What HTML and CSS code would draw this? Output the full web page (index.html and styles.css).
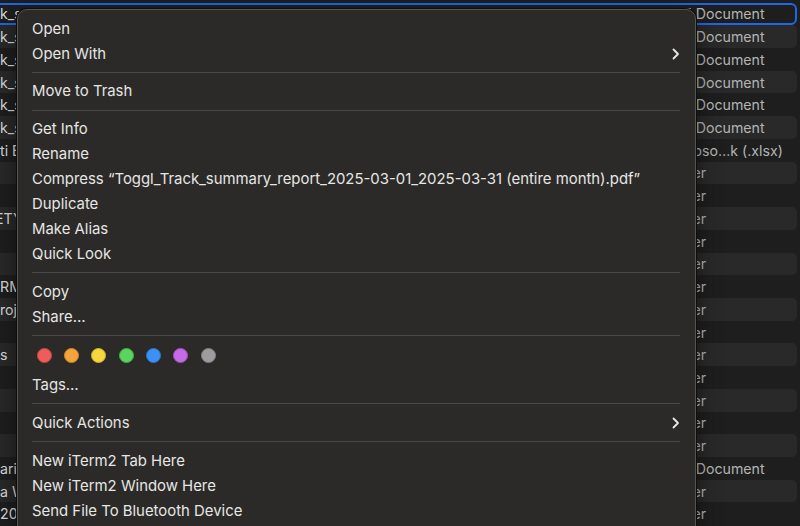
FILE: index.html
```html
<!DOCTYPE html>
<html>
<head>
<meta charset="utf-8">
<link rel="stylesheet" href="styles.css">
</head>
<body>
<div class="finder">
  <div class="row sel"><span class="name">k_summary_report</span><span class="date">2025-03-31 at 10:18</span><span class="size">44,7 KB</span><span class="kind">PDF Document</span></div>
  <div class="row alt"><span class="name">k_summary</span><span class="date">2025-03-01</span><span class="size">41 KB</span><span class="kind">PDF Document</span></div>
  <div class="row"><span class="name">k_summary</span><span class="date"></span><span class="size"></span><span class="kind">PDF Document</span></div>
  <div class="row alt"><span class="name">k_summary</span><span class="date"></span><span class="size"></span><span class="kind">PDF Document</span></div>
  <div class="row"><span class="name">k_summary</span><span class="date"></span><span class="size"></span><span class="kind">PDF Document</span></div>
  <div class="row alt"><span class="name">k_summary</span><span class="date"></span><span class="size"></span><span class="kind">PDF Document</span></div>
  <div class="row"><span class="name">ti Excel</span><span class="date"></span><span class="size"></span><span class="kind">Microso…k (.xlsx)</span></div>
  <div class="row alt"><span class="name"></span><span class="date"></span><span class="size"></span><span class="kind">Folder</span></div>
  <div class="row"><span class="name"></span><span class="date"></span><span class="size"></span><span class="kind">Folder</span></div>
  <div class="row alt"><span class="name cut">ETY</span><span class="date"></span><span class="size"></span><span class="kind">Folder</span></div>
  <div class="row"><span class="name"></span><span class="date"></span><span class="size"></span><span class="kind">Folder</span></div>
  <div class="row alt"><span class="name"></span><span class="date"></span><span class="size"></span><span class="kind">Folder</span></div>
  <div class="row"><span class="name">RM</span><span class="date"></span><span class="size"></span><span class="kind">Folder</span></div>
  <div class="row alt"><span class="name">roj</span><span class="date"></span><span class="size"></span><span class="kind">Folder</span></div>
  <div class="row"><span class="name"></span><span class="date"></span><span class="size"></span><span class="kind">Folder</span></div>
  <div class="row alt"><span class="name">s</span><span class="date"></span><span class="size"></span><span class="kind">Folder</span></div>
  <div class="row"><span class="name"></span><span class="date"></span><span class="size"></span><span class="kind">Folder</span></div>
  <div class="row alt"><span class="name"></span><span class="date"></span><span class="size"></span><span class="kind">Folder</span></div>
  <div class="row"><span class="name"></span><span class="date"></span><span class="size"></span><span class="kind">Folder</span></div>
  <div class="row alt"><span class="name"></span><span class="date"></span><span class="size"></span><span class="kind">Folder</span></div>
  <div class="row"><span class="name">arity</span><span class="date"></span><span class="size"></span><span class="kind">PDF Document</span></div>
  <div class="row alt"><span class="name">a Work</span><span class="date"></span><span class="size"></span><span class="kind">Folder</span></div>
  <div class="row"><span class="name">2025</span><span class="date"></span><span class="size"></span><span class="kind">Folder</span></div>
</div>

<div class="menu">
  <div class="item">Open</div>
  <div class="item sub">Open With<svg class="chev" viewBox="0 0 8 12" width="8" height="12"><polyline points="1.5,1.5 6,6 1.5,10.5"/></svg></div>
  <div class="sep"></div>
  <div class="item">Move to Trash</div>
  <div class="sep"></div>
  <div class="item">Get Info</div>
  <div class="item">Rename</div>
  <div class="item">Compress “Toggl_Track_summary_report_2025-03-01_2025-03-31 (entire month).pdf”</div>
  <div class="item">Duplicate</div>
  <div class="item">Make Alias</div>
  <div class="item">Quick Look</div>
  <div class="sep"></div>
  <div class="item">Copy</div>
  <div class="item">Share…</div>
  <div class="sep"></div>
  <div class="tags">
    <span class="dot red"></span><span class="dot orange"></span><span class="dot yellow"></span><span class="dot green"></span><span class="dot blue"></span><span class="dot purple"></span><span class="dot gray"></span>
  </div>
  <div class="item">Tags…</div>
  <div class="sep"></div>
  <div class="item sub">Quick Actions<svg class="chev" viewBox="0 0 8 12" width="8" height="12"><polyline points="1.5,1.5 6,6 1.5,10.5"/></svg></div>
  <div class="sep"></div>
  <div class="item">New iTerm2 Tab Here</div>
  <div class="item">New iTerm2 Window Here</div>
  <div class="item">Send File To Bluetooth Device</div>
</div>
</body>
</html>
```

FILE: styles.css
```css
html, body {
  margin: 0;
  padding: 0;
}
body {
  width: 800px;
  height: 526px;
  overflow: hidden;
  background: #1e1e1e;
  font-family: Inter, "Noto Sans", sans-serif;
  font-size: 14.2px;
  color: #dedede;
  position: relative;
}

.finder {
  display: flex;
  flex-direction: column;
  padding-top: 2.6px;
  margin-left: -10px;
  width: 807px;
}
.row {
  height: 22.73px;
  display: flex;
  align-items: center;
  border-radius: 5px;
  box-sizing: border-box;
  white-space: nowrap;
  position: relative;
}
.row.alt {
  background: #292929;
}
.row.sel {
  border: 2px solid #1f66ea;
  border-radius: 6px;
}
.name {
  width: 130px;
  padding-left: 10px;
  box-sizing: border-box;
  overflow: hidden;
  color: #dcdcdc;
}
.name.cut {
  text-indent: -5px;
}
.date {
  width: 200px;
  color: #8c8c8c;
}
.size {
  width: 344px;
  text-align: right;
  padding-right: 40px;
  box-sizing: border-box;
  color: #8c8c8c;
}
.kind {
  color: #b4b4b4;
}
.sel .name { padding-left: 8px; }
.sel .size { width: 342px; }

.menu {
  position: absolute;
  left: 17px;
  top: 9px;
  width: 679px;
  height: 540px;
  box-sizing: border-box;
  background: #2b2a28;
  border: 1px solid #55544f;
  border-radius: 10px;
  box-shadow: 0 0 0 1px #0e0e0e, 0 8px 24px rgba(0,0,0,0.5);
  padding: 6px 15px 0 14px;
  display: flex;
  flex-direction: column;
}
.item {
  height: 25px;
  display: flex;
  align-items: center;
  justify-content: space-between;
  color: #e6e6e4;
  white-space: nowrap;
  font-size: 14.9px;
}
.chev {
  fill: none;
  stroke: #e8e8e8;
  stroke-width: 1.8;
  stroke-linecap: round;
  stroke-linejoin: round;
}
.sep {
  height: 12.75px;
  display: flex;
  align-items: center;
}
.sep::before {
  content: "";
  flex: 1;
  height: 1px;
  background: #4a4946;
}
.tags {
  height: 30.5px;
  box-sizing: border-box;
  padding-bottom: 3px;
  display: flex;
  align-items: center;
  gap: 12.4px;
  padding-left: 4.5px;
}
.dot {
  width: 15px;
  height: 15px;
  border-radius: 50%;
  box-sizing: border-box;
}
.red { background: #ee5d5a; border: 1px solid #c94744; }
.orange { background: #f3a43c; border: 1px solid #cf8628; }
.yellow { background: #f5d83e; border: 1px solid #cdb22a; }
.green { background: #5bd35f; border: 1px solid #41ad47; }
.blue { background: #3b92f4; border: 1px solid #2a74cc; }
.purple { background: #c66ae6; border: 1px solid #a24fc0; }
.gray { background: #9d9d9f; border: 1px solid #808082; }
```
